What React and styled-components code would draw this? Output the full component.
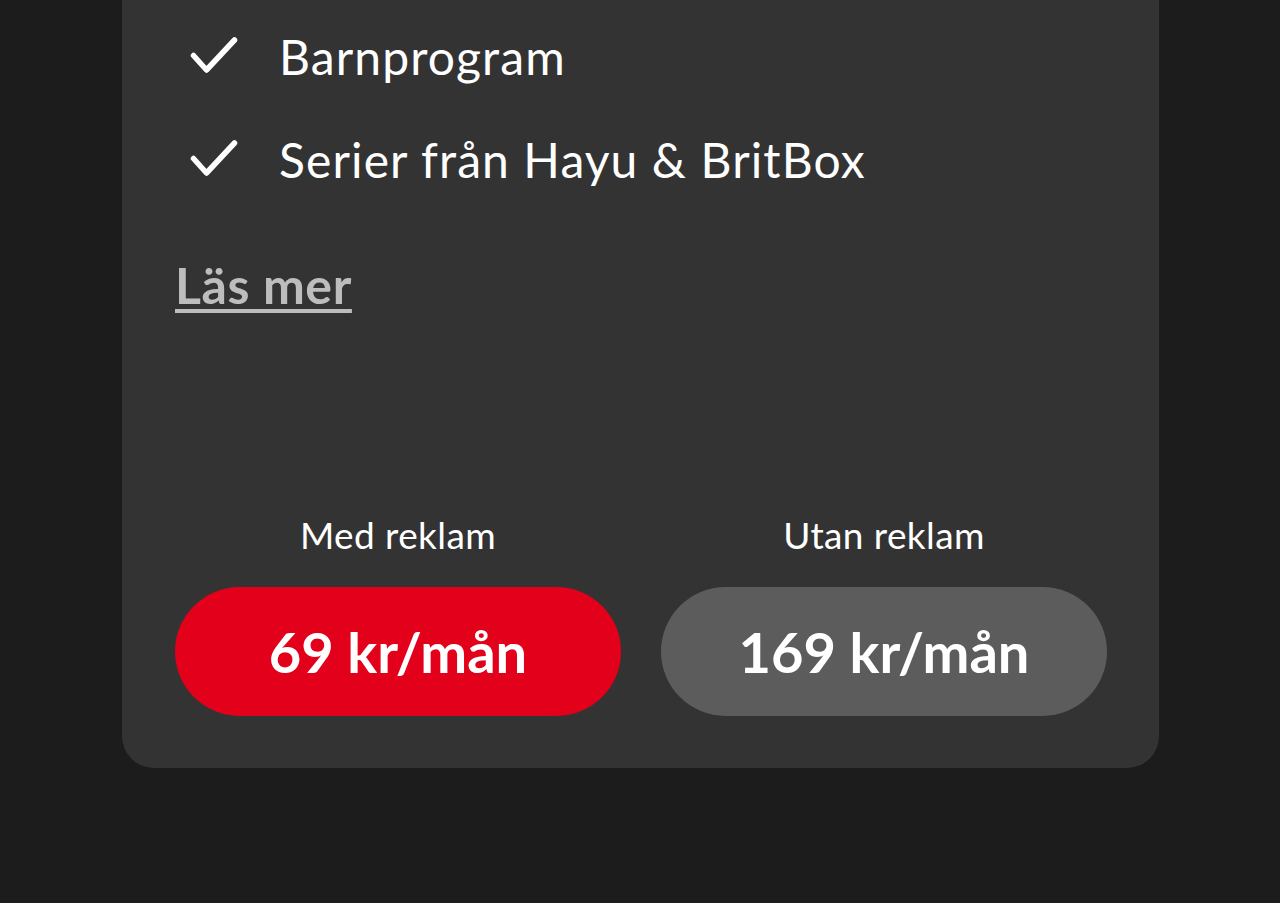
import React from "react"
import styled, { createGlobalStyle } from "styled-components"

const GlobalStyle = createGlobalStyle`
  html, body {
    margin: 0;
    padding: 0;
    background: #1c1c1c;
    overflow: hidden;
  }
  body {
    font-family: Lato, "Noto Sans", sans-serif;
    color: #fff;
  }
`

const features = ["Barnprogram", "Serier från Hayu & BritBox"]

const prices = [
  { label: "Med reklam", price: "69 kr/mån", primary: true },
  { label: "Utan reklam", price: "169 kr/mån", primary: false },
]

const Page = styled.div`
  height: 903px;
  padding: 0 121px 0 122px;
  box-sizing: border-box;
`

const Card = styled.div`
  margin-top: -40px;
  background: #333333;
  border-radius: 32px;
  padding: 40px 52px 52px 53px;
  display: flex;
  flex-direction: column;
`

const FeatureList = styled.ul`
  list-style: none;
  margin: 26px 0 0;
  padding: 0 0 0 15px;
  display: flex;
  flex-direction: column;
  gap: 43px;
`

const Feature = styled.li`
  display: flex;
  align-items: center;
  gap: 41px;
  height: 60px;
  font-size: 48px;
  font-weight: 400;
  letter-spacing: 1.1px;
  white-space: nowrap;
`

const CheckIcon = styled.svg`
  width: 48px;
  height: 40px;
  flex: none;
`

const ReadMore = styled.a`
  align-self: flex-start;
  margin-top: 71px;
  height: 50px;
  line-height: 50px;
  font-size: 50px;
  font-weight: 700;
  letter-spacing: 0.6px;
  color: #bdbdbd;
  text-decoration: underline;
  text-decoration-thickness: 4px;
  text-underline-offset: 5px;
  cursor: pointer;
`

const PriceRow = styled.div`
  margin-top: 205px;
  display: grid;
  grid-template-columns: 1fr 1fr;
  column-gap: 40px;
`

const PriceOption = styled.div`
  display: flex;
  flex-direction: column;
  align-items: center;
  gap: 32px;
`

const PriceLabel = styled.div`
  height: 40px;
  line-height: 40px;
  font-size: 37px;
  font-weight: 400;
  letter-spacing: 0.4px;
`

const PriceButton = styled.button`
  width: 100%;
  height: 129px;
  border: none;
  border-radius: 65px;
  background: ${(p) => (p.$primary ? "#e2001a" : "#5c5c5c")};
  color: #fff;
  font-family: inherit;
  font-size: 56px;
  font-weight: 700;
  cursor: pointer;
`

function Check() {
  return (
    <CheckIcon viewBox="0 0 48 40" fill="none">
      <path
        d="M3.5 19.5 L16.5 34 L44.5 4"
        stroke="#fff"
        strokeWidth="5.5"
        strokeLinecap="round"
        strokeLinejoin="round"
      />
    </CheckIcon>
  )
}

export default function App() {
  return (
    <>
      <GlobalStyle />
      <Page>
        <Card>
          <FeatureList>
            {features.map((f) => (
              <Feature key={f}>
                <Check />
                {f}
              </Feature>
            ))}
          </FeatureList>
          <ReadMore>Läs mer</ReadMore>
          <PriceRow>
            {prices.map((p) => (
              <PriceOption key={p.label}>
                <PriceLabel>{p.label}</PriceLabel>
                <PriceButton $primary={p.primary}>{p.price}</PriceButton>
              </PriceOption>
            ))}
          </PriceRow>
        </Card>
      </Page>
    </>
  )
}
